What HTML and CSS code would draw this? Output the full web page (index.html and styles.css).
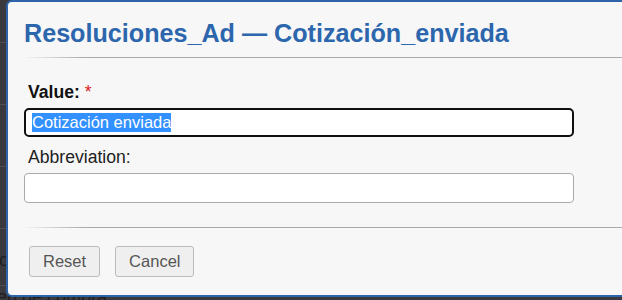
FILE: index.html
```html
<!DOCTYPE html>
<html lang="es">
<head>
<meta charset="utf-8">
<title>Resoluciones_Ad — Cotización_enviada</title>
<link rel="stylesheet" href="styles.css">
</head>
<body>
<div class="page">
  <div class="page-row"></div>
  <div class="page-row"></div>
  <div class="page-row"></div>
  <div class="page-row"></div>
  <div class="page-row row-text">Estado</div>
  <div class="page-row row-last">Orden de compra</div>
</div>
<div class="overlay"></div>
<div class="dialog" role="dialog">
  <div class="dialog-header">
    <h1 class="dialog-title">Resoluciones_Ad — Cotización_enviada</h1>
  </div>
  <div class="rule"></div>
  <form class="dialog-body">
    <label class="field-label bold">Value: <span class="req">*</span></label>
    <div class="input focused"><span class="sel">Cotización enviada</span></div>
    <label class="field-label">Abbreviation:</label>
    <div class="input"></div>
  </form>
  <div class="rule footer-rule"></div>
  <div class="dialog-footer">
    <button class="btn" type="button">Reset</button>
    <button class="btn" type="button">Cancel</button>
  </div>
</div>
</body>
</html>
```
FILE: styles.css
```css
html, body {
  margin: 0;
  padding: 0;
}
body {
  width: 622px;
  height: 300px;
  overflow: hidden;
  position: relative;
  background: #3e3e41;
  font-family: "Liberation Sans", Arial, sans-serif;
}
.page {
  display: flex;
  flex-direction: column;
}
.page-row {
  height: 61px;
  flex: none;
  border-bottom: 1px solid #55555a;
  color: #1e1e20;
  font-size: 18px;
}
.page-row:first-child {
  height: 42px;
}
.row-text {
  height: 40px;
  padding-top: 16px;
  line-height: 30px;
  text-indent: -47px;
}
.row-last {
  line-height: 22px;
  padding-top: 0;
  text-indent: -33px;
  border-bottom: none;
}
.overlay {
  position: absolute;
  inset: 0;
  background: rgba(40, 40, 44, 0.15);
}
.dialog {
  position: absolute;
  left: 6px;
  top: 0;
  width: 660px;
  height: 297px;
  box-sizing: border-box;
  border: 2px solid #2c63a9;
  border-radius: 6px;
  background: #f7f7f7;
  display: flex;
  flex-direction: column;
}
.dialog-header {
  padding: 16px 16px 9px 16px;
}
.dialog-title {
  margin: 0;
  font-size: 25.15px;
  line-height: 30px;
  font-weight: bold;
  color: #2c66ad;
}
.rule {
  flex: none;
  height: 1px;
  margin-left: 16px;
  background: linear-gradient(to right, rgba(170,170,170,0) 0, #aaaaaa 60px, #aaaaaa 100%);
}
.dialog-body {
  display: flex;
  flex-direction: column;
  padding: 23px 16px 24px 16px;
  margin: 0;
}
.field-label {
  font-size: 17.6px;
  line-height: 22px;
  color: #222;
  padding-left: 4px;
  margin-bottom: 5px;
}
.field-label.bold {
  font-weight: bold;
  color: #111;
}
.req {
  color: #e02020;
  font-weight: normal;
}
.input {
  width: 550px;
  height: 30px;
  box-sizing: border-box;
  border: 1px solid #aaaaaa;
  border-radius: 4px;
  background: #fff;
  font-size: 16.5px;
  display: flex;
  align-items: center;
  padding-left: 7px;
  margin-bottom: 9px;
}
.input:last-child {
  margin-bottom: 0;
}
.input.focused {
  height: 29px;
  border: 2px solid #101010;
  border-radius: 5px;
  padding-left: 6px;
}
.sel {
  background: #3390ff;
  color: #fff;
  line-height: 19px;
}
.dialog-footer {
  display: flex;
  gap: 15px;
  padding: 18px 16px 0 21px;
}
.btn {
  height: 31px;
  box-sizing: border-box;
  padding: 0 13px;
  border: 1px solid #bbbbbb;
  border-radius: 3px;
  background: #efefef;
  color: #555;
  font-family: "Liberation Sans", Arial, sans-serif;
  font-size: 16.5px;
}
```
